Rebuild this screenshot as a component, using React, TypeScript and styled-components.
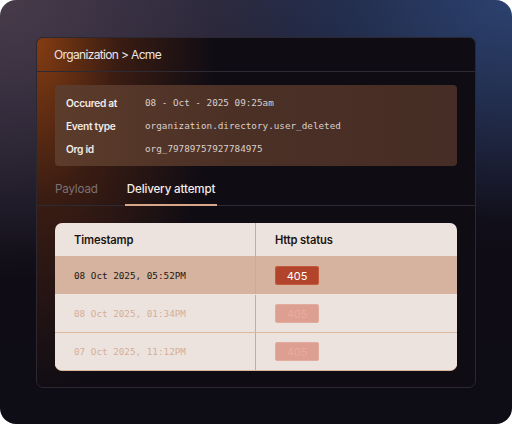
import styled, { createGlobalStyle } from 'styled-components';

const GlobalStyle = createGlobalStyle`
  html, body {
    margin: 0;
    padding: 0;
    background: #ffffff;
  }
  body {
    font-family: Inter, 'Noto Sans', sans-serif;
    -webkit-font-smoothing: antialiased;
  }
`;

const details = [
  { label: 'Occured at', value: '08 - Oct - 2025 09:25am' },
  { label: 'Event type', value: 'organization.directory.user_deleted' },
  { label: 'Org id', value: 'org_79789757927784975' },
];

const attempts = [
  { time: '08 Oct 2025, 05:52PM', status: '405', active: true },
  { time: '08 Oct 2025, 01:34PM', status: '405', active: false },
  { time: '07 Oct 2025, 11:12PM', status: '405', active: false },
];

export default function App() {
  return (
    <>
      <GlobalStyle />
      <Frame>
        <Card>
          <CardHeader>Organization &gt; Acme</CardHeader>
          <InfoBox>
            {details.map((d) => (
              <InfoRow key={d.label}>
                <InfoLabel>{d.label}</InfoLabel>
                <InfoValue>{d.value}</InfoValue>
              </InfoRow>
            ))}
          </InfoBox>
          <Tabs>
            <Tab>Payload</Tab>
            <Tab active>Delivery attempt</Tab>
          </Tabs>
          <Table>
            <HeadRow>
              <HeadCell>Timestamp</HeadCell>
              <HeadCell>Http status</HeadCell>
            </HeadRow>
            {attempts.map((a, i) => (
              <Row key={i} active={a.active} divided={i === 2}>
                <TimeCell active={a.active}>{a.time}</TimeCell>
                <StatusCell>
                  <Badge active={a.active}>{a.status}</Badge>
                </StatusCell>
              </Row>
            ))}
          </Table>
        </Card>
      </Frame>
    </>
  );
}

const Frame = styled.div`
  width: 512px;
  height: 424px;
  box-sizing: border-box;
  border-radius: 16px;
  padding: 37px 36px 0;
  background:
    radial-gradient(ellipse 300px 220px at 100% 0%, #2b416e 0%, rgba(43, 65, 110, 0) 100%),
    radial-gradient(ellipse 340px 280px at 0% 0%, #483b4a 0%, rgba(72, 59, 74, 0) 100%),
    linear-gradient(180deg, #1e2036 0%, #0f0c16 60%, #0e0c15 100%);
  overflow: hidden;
`;

const Card = styled.div`
  width: 440px;
  height: 351px;
  box-sizing: border-box;
  border: 1px solid #2c2831;
  border-radius: 7px;
  display: flex;
  flex-direction: column;
  background:
    radial-gradient(ellipse 180px 360px at 0% 0%, rgba(136, 62, 18, 0.97) 0%, rgba(110, 48, 16, 0.45) 45%, rgba(110, 48, 16, 0) 100%),
    #0f0c14;
  overflow: hidden;
`;

const CardHeader = styled.div`
  height: 33px;
  display: flex;
  align-items: center;
  padding-left: 17px;
  border-bottom: 1px solid #2e2a33;
  color: #ebe6e4;
  font-size: 12px;
  letter-spacing: -0.65px;
`;

const InfoBox = styled.div`
  margin: 13px 18px 0;
  height: 81px;
  box-sizing: border-box;
  border-radius: 4px;
  padding: 6px 11px;
  display: flex;
  flex-direction: column;
  justify-content: center;
  background: linear-gradient(90deg, #5c3c2b 0%, #4b3026 45%, #462d25 100%);
`;

const InfoRow = styled.div`
  height: 23px;
  display: flex;
  align-items: center;
`;

const InfoLabel = styled.span`
  width: 79px;
  color: #f1ebe8;
  font-size: 10.2px;
  font-weight: 600;
  letter-spacing: -0.3px;
`;

const InfoValue = styled.span`
  color: #d8cfcb;
  font-family: 'DejaVu Sans Mono', 'Liberation Mono', monospace;
  font-size: 9.3px;
`;

const Tabs = styled.div`
  height: 40px;
  box-sizing: border-box;
  display: flex;
  gap: 25px;
  padding-left: 16px;
  border-bottom: 1px solid #2e2a33;
`;

const Tab = styled.div<{ active?: boolean }>`
  display: flex;
  align-items: center;
  padding: 8px 2px 0;
  margin-bottom: -1px;
  font-size: 11.6px;
  letter-spacing: -0.15px;
  font-weight: ${({ active }) => (active ? 500 : 400)};
  color: ${({ active }) => (active ? '#f2ece9' : '#7d7276')};
  border-bottom: 2px solid ${({ active }) => (active ? '#d8a689' : 'transparent')};
`;

const Table = styled.div`
  margin: 17px 18px 0;
  border-radius: 7px;
  overflow: hidden;
  background: #ede3de;
  border-bottom: 1px solid #ddb89e;
`;

const HeadRow = styled.div`
  height: 33px;
  display: grid;
  grid-template-columns: 200px 1fr;
`;

const HeadCell = styled.div`
  display: flex;
  align-items: center;
  padding-left: 19px;
  color: #1b1512;
  font-size: 11.2px;
  font-weight: 600;
  letter-spacing: -0.15px;
  & + & {
    border-left: 1px solid #d3a988;
  }
`;

const Row = styled.div<{ active: boolean; divided: boolean }>`
  height: 37px;
  display: grid;
  grid-template-columns: 200px 1fr;
  background: ${({ active }) => (active ? '#d5b39e' : '#ede3de')};
  border-top: 1px solid ${({ divided }) => (divided ? '#ddb89e' : 'transparent')};
`;

const TimeCell = styled.div<{ active: boolean }>`
  display: flex;
  align-items: center;
  padding-left: 19px;
  font-family: 'DejaVu Sans Mono', 'Liberation Mono', monospace;
  font-size: 9.3px;
  color: ${({ active }) => (active ? '#221814' : '#d4ae98')};
`;

const StatusCell = styled.div`
  display: flex;
  align-items: center;
  padding-left: 19px;
  border-left: 1px solid #d3a988;
`;

const Badge = styled.span<{ active: boolean }>`
  width: 44px;
  height: 19px;
  border-radius: 3px;
  display: flex;
  align-items: center;
  justify-content: center;
  font-size: 11px;
  background: ${({ active }) => (active ? '#b1442a' : '#dc9f92')};
  color: ${({ active }) => (active ? '#ffffff' : '#ecab9b')};
  box-shadow: inset 0 0 0 1px ${({ active }) => (active ? '#c25a3e' : '#e3ab9e')};
`;
